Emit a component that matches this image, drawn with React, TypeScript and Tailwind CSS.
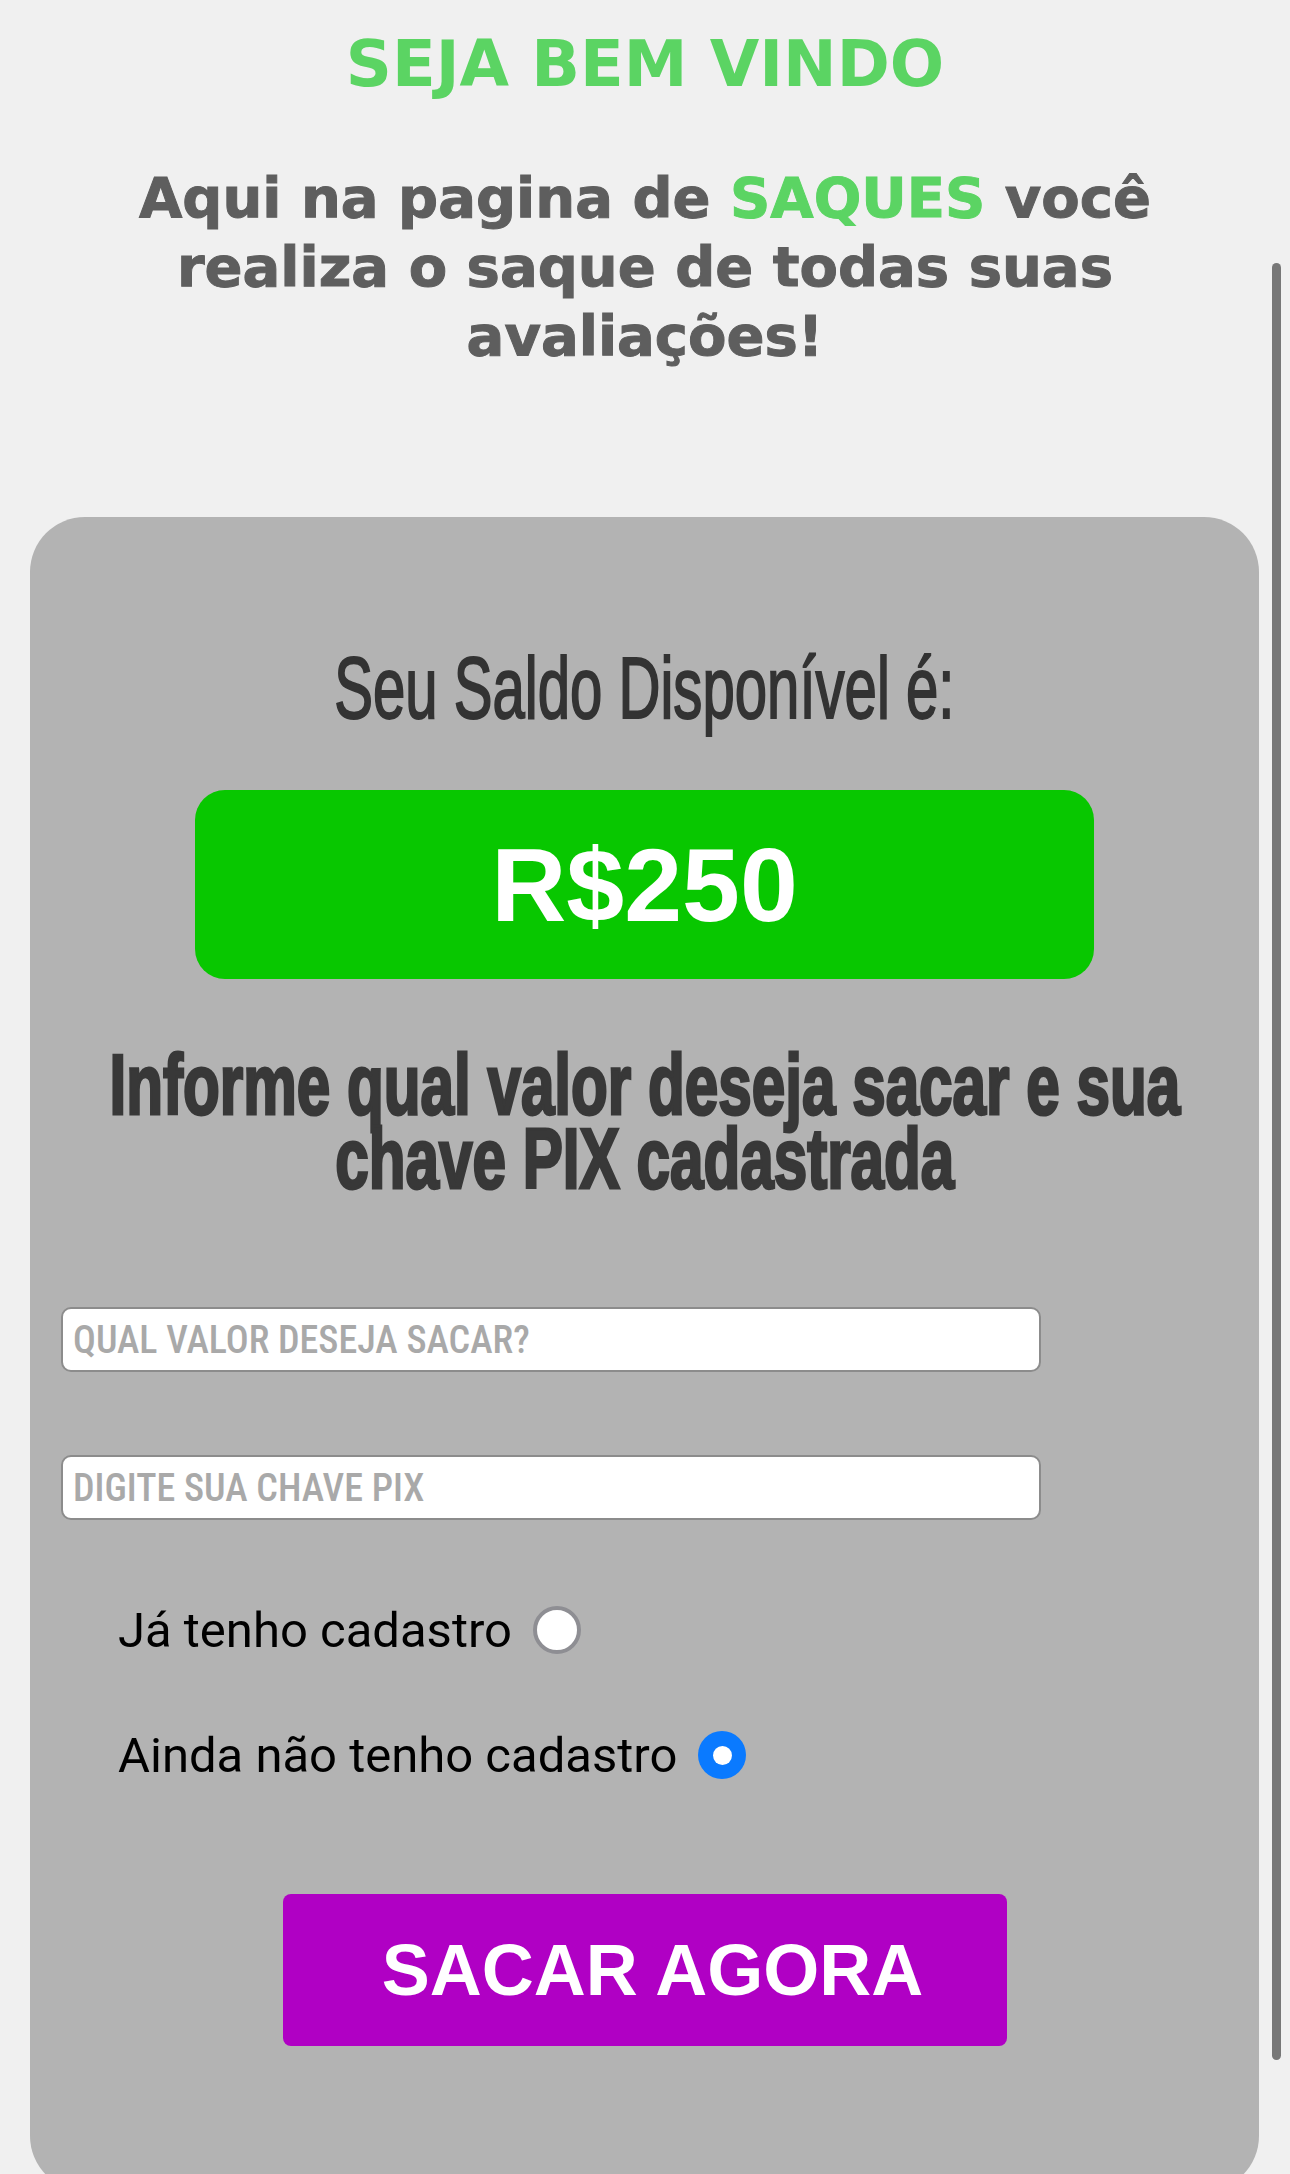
import { useState } from 'react';

const RadioRow = ({ label, checked, onClick }: { label: string; checked: boolean; onClick: () => void }) => (
  <button type="button" onClick={onClick} className="flex h-12 items-center gap-[21px]">
    <span className="font-['Roboto'] text-[49px] leading-none text-black">{label}</span>
    {checked ? (
      <span className="flex h-12 w-12 items-center justify-center rounded-full bg-[#0a7aff]">
        <span className="h-[19px] w-[19px] rounded-full bg-white" />
      </span>
    ) : (
      <span className="h-12 w-12 rounded-full border-4 border-[#8e8e93] bg-white" />
    )}
  </button>
);

const App = () => {
  const [hasAccount, setHasAccount] = useState(false);

  return (
    <div className="relative min-h-screen overflow-hidden bg-[#f0f0f0]">
      <header className="pt-[32px] text-center font-['DejaVu_Sans',sans-serif] font-bold">
        <h1 className="text-[64px] leading-[64px] text-[#5bd463]">SEJA BEM VINDO</h1>
        <h2 className="mt-[67px] text-[56px] leading-[69px] text-[#5e5e5e] [-webkit-text-stroke:1px_#5e5e5e]">
          Aqui na pagina de <span className="text-[#5bd463] [-webkit-text-stroke:1px_#5bd463]">SAQUES</span> você
          <br />
          realiza o saque de todas suas
          <br />
          avaliações!
        </h2>
      </header>

      <main className="ml-[30px] mr-[31px] mt-[147px] rounded-[55px] bg-[#b3b3b3] pb-[145px] pt-[127px]">
        <div className="flex justify-center">
          <p className="whitespace-nowrap font-['Liberation_Sans',Arial,sans-serif] text-[87px] leading-[87px] text-[#333] [-webkit-text-stroke:2px_#333] [transform:scaleX(0.668)]">
            Seu Saldo Disponível é:
          </p>
        </div>

        <div className="mx-auto mt-[59px] flex h-[189px] w-[899px] items-center justify-center rounded-[30px] bg-[#08c700]">
          <span className="font-['Liberation_Sans',Arial,sans-serif] text-[104px] font-bold leading-none text-white">R$250</span>
        </div>

        <div className="mt-[68px] flex justify-center">
          <p className="whitespace-nowrap text-center font-['Liberation_Sans',Arial,sans-serif] text-[86px] font-bold leading-[74px] text-[#383838] [-webkit-text-stroke:3px_#383838] [transform:scaleX(0.7)]">
            Informe qual valor deseja sacar e sua
            <br />
            chave PIX cadastrada
          </p>
        </div>

        <form onSubmit={(e) => e.preventDefault()}>
          <div className="pl-[31px]">
            <input
              type="text"
              placeholder="QUAL VALOR DESEJA SACAR?"
              className="mt-[112px] block h-[65px] w-[980px] rounded-[10px] border-2 border-[#8c8c8c] bg-white pl-[10px] font-['Roboto'] text-[38px] font-medium [font-stretch:75%] outline-none placeholder:text-[#a9a9a9]"
            />
            <input
              type="text"
              placeholder="DIGITE SUA CHAVE PIX"
              className="mt-[83px] block h-[65px] w-[980px] rounded-[10px] border-2 border-[#8c8c8c] bg-white pl-[10px] font-['Roboto'] text-[38px] font-medium [font-stretch:75%] outline-none placeholder:text-[#a9a9a9]"
            />

            <div className="mt-[86px] flex flex-col gap-[77px] pl-[57px]">
              <RadioRow label="Já tenho cadastro" checked={hasAccount} onClick={() => setHasAccount(true)} />
              <RadioRow label="Ainda não tenho cadastro" checked={!hasAccount} onClick={() => setHasAccount(false)} />
            </div>
          </div>

          <button
            type="submit"
            className="mx-auto mt-[115px] flex h-[152px] w-[724px] items-center justify-center rounded-[8px] bg-[#b000c4] pl-4 font-['Liberation_Sans',Arial,sans-serif] text-[72px] font-bold leading-none text-white"
          >
            SACAR AGORA
          </button>
        </form>
      </main>

      <div className="fixed right-[9px] top-[263px] h-[1797px] w-[9px] rounded-full bg-[#777]" />
    </div>
  );
};

export default App;
